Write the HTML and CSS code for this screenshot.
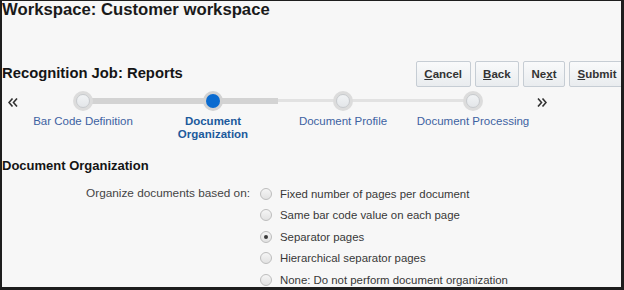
FILE: index.html
```html
<!DOCTYPE html>
<html lang="en">
<head>
<meta charset="utf-8">
<title>Recognition Job: Reports</title>
<link rel="stylesheet" href="styles.css">
</head>
<body>
<div class="frame">
  <h1 class="ws-title">Workspace: Customer workspace</h1>

  <div class="job-header">
    <h2 class="job-title">Recognition Job: Reports</h2>
    <div class="buttons">
      <button class="btn" type="button"><u>C</u>ancel</button>
      <button class="btn" type="button"><u>B</u>ack</button>
      <button class="btn" type="button">Ne<u>x</u>t</button>
      <button class="btn" type="button"><u>S</u>ubmit</button>
    </div>
  </div>

  <div class="train">
    <span class="nav nav-prev"><svg width="10" height="9" viewBox="0 0 10 9"><polyline points="4.5,0.5 1,4.5 4.5,8.5" fill="none" stroke="#333" stroke-width="1.6"/><polyline points="9,0.5 5.5,4.5 9,8.5" fill="none" stroke="#333" stroke-width="1.6"/></svg></span>
    <ol class="steps">
      <li class="track" aria-hidden="true"><span class="track-done"></span></li>
      <li class="step visited"><span class="dot"><span class="core"></span></span><span class="step-label">Bar Code Definition</span></li>
      <li class="step current"><span class="dot"><span class="core"></span></span><span class="step-label">Document Organization</span></li>
      <li class="step"><span class="dot"><span class="core"></span></span><span class="step-label">Document Profile</span></li>
      <li class="step"><span class="dot"><span class="core"></span></span><span class="step-label">Document Processing</span></li>
    </ol>
    <span class="nav nav-next"><svg width="10" height="9" viewBox="0 0 10 9"><polyline points="1,0.5 4.5,4.5 1,8.5" fill="none" stroke="#333" stroke-width="1.6"/><polyline points="5.5,0.5 9,4.5 5.5,8.5" fill="none" stroke="#333" stroke-width="1.6"/></svg></span>
  </div>

  <h3 class="section-title">Document Organization</h3>

  <div class="form-row">
    <div class="field-label">Organize documents based on:</div>
    <ul class="options">
      <li class="option"><span class="radio"></span>Fixed number of pages per document</li>
      <li class="option"><span class="radio"></span>Same bar code value on each page</li>
      <li class="option"><span class="radio checked"></span>Separator pages</li>
      <li class="option"><span class="radio"></span>Hierarchical separator pages</li>
      <li class="option"><span class="radio"></span>None: Do not perform document organization</li>
    </ul>
  </div>
</div>
</body>
</html>
```

FILE: styles.css
```css
html, body {
  margin: 0;
  padding: 0;
  background: #f7f7f7;
}

.frame {
  box-sizing: border-box;
  width: 624px;
  height: 290px;
  overflow: hidden;
  background: #f7f7f7;
  border-style: solid;
  border-color: #1e1e1e;
  border-width: 1px 3px 3px 2px;
  font-family: "Liberation Sans", Arial, sans-serif;
  color: #333;
}

.ws-title {
  margin: 0;
  font-size: 16.7px;
  line-height: 17px;
  font-weight: bold;
  color: #1a1a1a;
}

.job-header {
  display: flex;
  align-items: flex-start;
  margin-top: 43px;
}

.job-title {
  margin: 0;
  font-size: 14.8px;
  line-height: 24px;
  font-weight: bold;
  color: #151515;
}

.buttons {
  display: flex;
  gap: 4px;
  margin-left: auto;
  margin-right: -4px;
}

.btn {
  height: 26px;
  padding: 0 7.5px;
  border: 1px solid #c6cdd4;
  border-radius: 2px;
  background: linear-gradient(#f9fafb, #e9ecef);
  font-family: "Liberation Sans", Arial, sans-serif;
  font-size: 11.5px;
  font-weight: bold;
  color: #333;
}

.btn u {
  text-underline-offset: 1px;
}

.train {
  display: flex;
  align-items: flex-start;
  margin-top: 4px;
}

.nav {
  display: block;
  width: 10px;
  height: 9px;
  margin-top: 7px;
}

.nav svg {
  display: block;
}

.nav-prev {
  margin-left: 6px;
}

.nav-next {
  margin-left: -1px;
}

.steps {
  position: relative;
  display: grid;
  grid-template-columns: repeat(4, 130px);
  margin: 0;
  padding: 0;
  list-style: none;
}

.track {
  position: absolute;
  left: 65px;
  top: 8px;
  width: 389px;
  height: 3px;
  background: #e2e2e2;
}

.track-done {
  position: absolute;
  left: 0;
  top: -1px;
  width: 195px;
  height: 6px;
  background: #d3d3d3;
}

.step {
  position: relative;
  display: flex;
  flex-direction: column;
  align-items: center;
}

.dot {
  box-sizing: border-box;
  display: flex;
  align-items: center;
  justify-content: center;
  width: 20px;
  height: 20px;
  border-radius: 50%;
  background: #dcdcdc;
}

.core {
  box-sizing: border-box;
  width: 14px;
  height: 14px;
  border-radius: 50%;
  border: 1px solid #c8cbce;
  background: linear-gradient(#f1f3f5, #e3e6e9);
}

.current .dot {
  background: #d2d2d2;
}

.current .core {
  border: none;
  background: #0a6bd0;
}

.step-label {
  max-width: 116px;
  margin-top: 4px;
  font-size: 11.5px;
  line-height: 13px;
  text-align: center;
  color: #3d62a2;
}

.current .step-label {
  font-weight: bold;
  color: #1c5a9c;
}

.section-title {
  margin: 17px 0 0;
  font-size: 13px;
  line-height: 16px;
  font-weight: bold;
  color: #141414;
}

.form-row {
  display: flex;
  align-items: flex-start;
  margin-top: 9px;
}

.field-label {
  width: 248px;
  font-size: 11.8px;
  line-height: 21.5px;
  text-align: right;
  color: #444;
}

.options {
  margin: 0 0 0 10px;
  padding: 0;
  list-style: none;
}

.option {
  display: flex;
  align-items: center;
  gap: 8px;
  height: 21.5px;
  font-size: 11.4px;
  color: #383838;
}

.radio {
  box-sizing: border-box;
  position: relative;
  flex: none;
  width: 12px;
  height: 12px;
  border-radius: 50%;
  border: 1px solid #bdbdbd;
  background: linear-gradient(#f5f5f5, #e2e2e2);
}

.radio.checked::after {
  content: "";
  position: absolute;
  left: 3px;
  top: 3px;
  width: 4px;
  height: 4px;
  border-radius: 50%;
  background: #3a3a3a;
}
```
